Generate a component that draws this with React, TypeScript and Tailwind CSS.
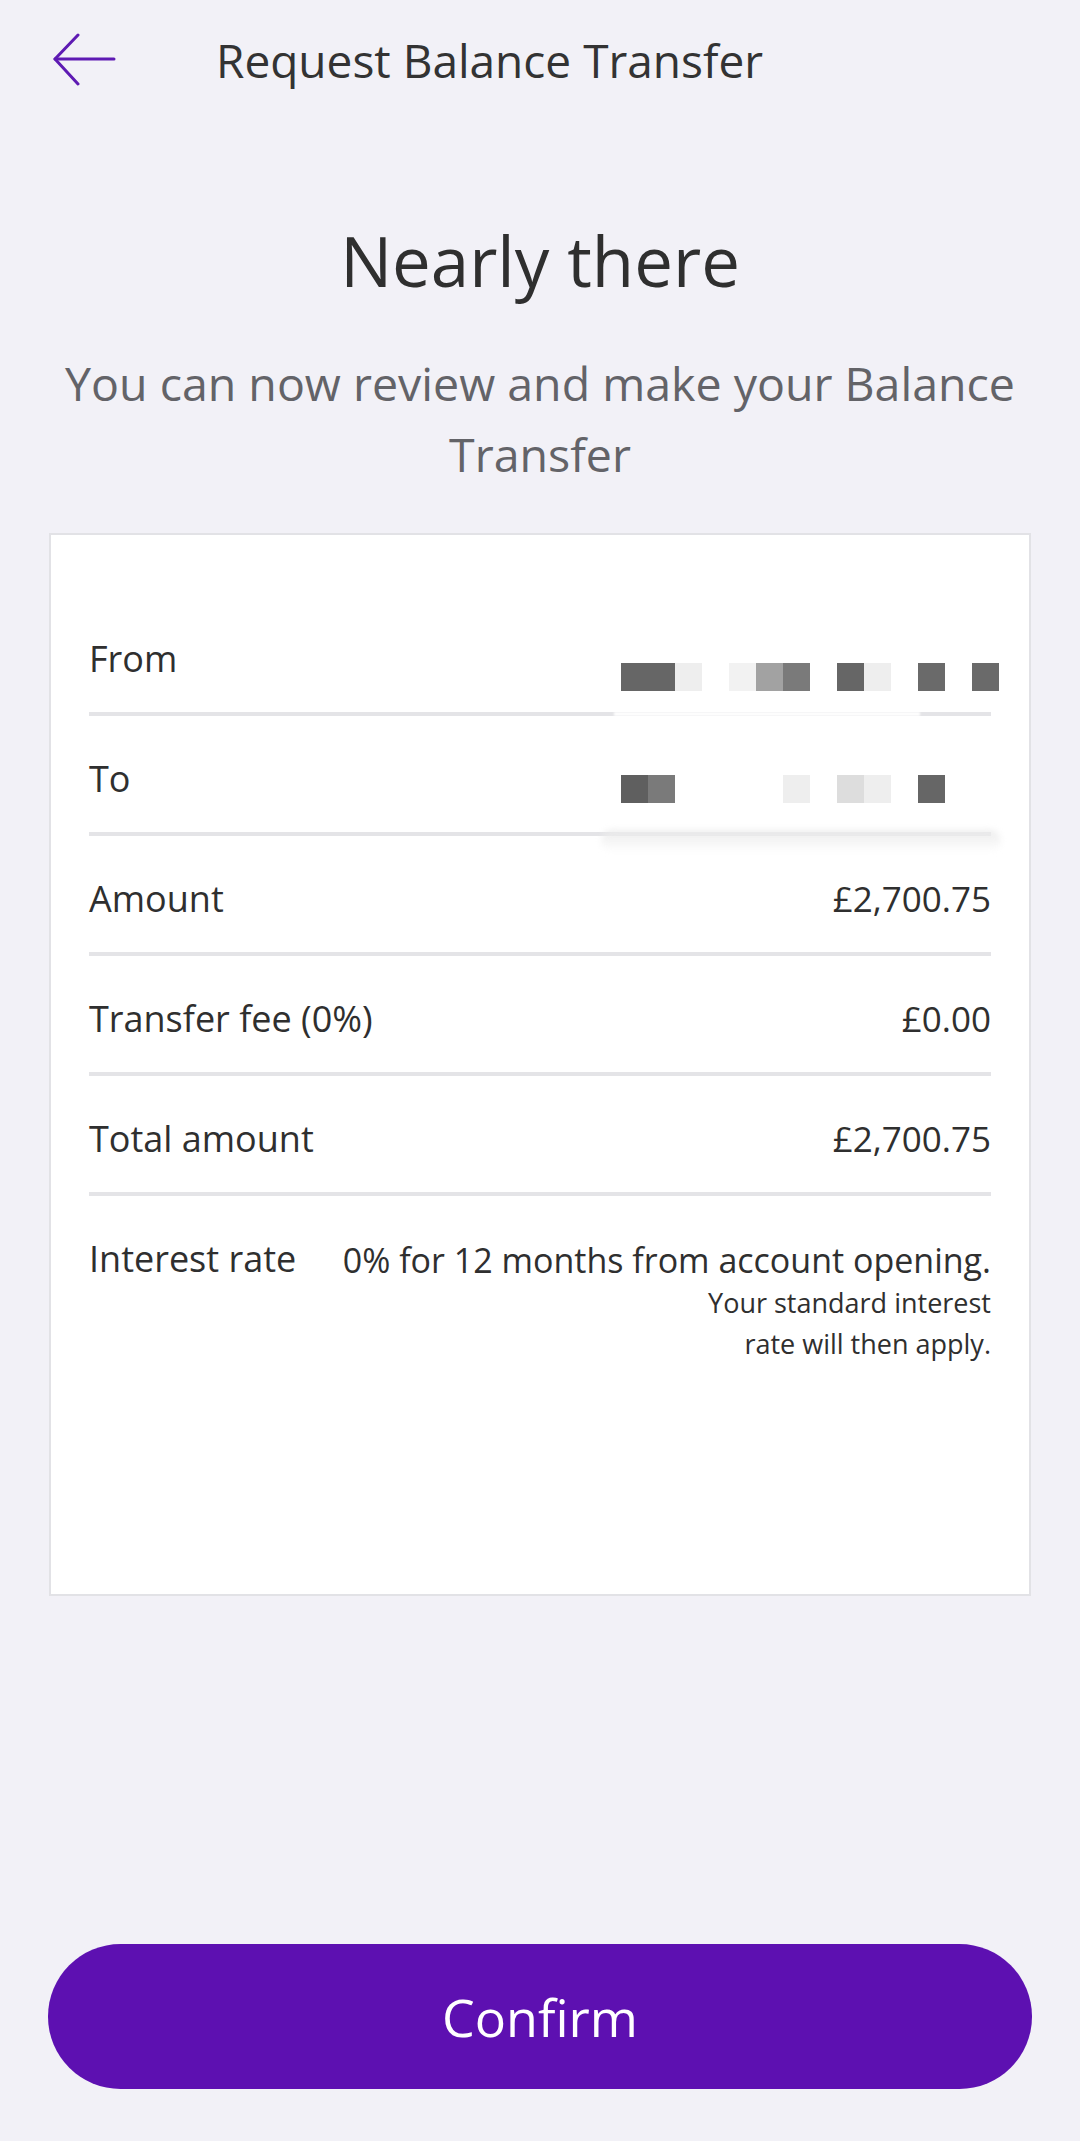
import React from "react";

const fromCells = [
  "bg-[#666666]",
  "bg-[#666666]",
  "bg-[#eeeeee]",
  "bg-white",
  "bg-[#f2f2f2]",
  "bg-[#a2a2a2]",
  "bg-[#7a7a7a]",
  "bg-white",
  "bg-[#666666]",
  "bg-[#eeeeee]",
  "bg-white",
  "bg-[#6a6a6a]",
  "bg-white",
  "bg-[#6a6a6a]",
];

const toCells = [
  "bg-[#5f5f5f]",
  "bg-[#7a7a7a]",
  "bg-white",
  "bg-white",
  "bg-white",
  "bg-white",
  "bg-[#eeeeee]",
  "bg-white",
  "bg-[#dddddd]",
  "bg-[#eeeeee]",
  "bg-white",
  "bg-[#666666]",
  "bg-white",
  "bg-white",
];

function Mosaic({ cells }: { cells: string[] }) {
  return (
    <div className="flex">
      {cells.map((c, i) => (
        <div key={i} className={"w-[27px] h-[28px] " + c} />
      ))}
    </div>
  );
}

function Row({ label, value }: { label: string; value: string }) {
  return (
    <div className="flex items-start justify-between pt-[42px] pb-[32px] border-b-4 border-[#e4e4e7] leading-[42px] text-[#2f2f2f]">
      <span className="text-[36px]">{label}</span>
      <span className="text-[35px]">{value}</span>
    </div>
  );
}

export default function App() {
  return (
    <div className="w-[1080px] min-h-[2141px] bg-[#f2f1f7] font-['Open_Sans',sans-serif] text-[#2f2f2f]">
      <header className="h-[120px] flex items-center">
        <button type="button" aria-label="Back" className="ml-[52px] w-[64px] h-[54px] flex items-center">
          <svg width="64" height="54" viewBox="0 0 64 54" fill="none" stroke="#5e1ab3" strokeWidth={3} strokeLinecap="round" strokeLinejoin="round">
            <path d="M3 26h59" />
            <path d="M26 2L3 26l23 25" />
          </svg>
        </button>
        <h1 className="ml-[100px] text-[46px] leading-[56px] text-[#333333]">Request Balance Transfer</h1>
      </header>

      <h2 className="mt-[100px] text-center text-[69px] leading-[80px] text-[#2f2f2f]">Nearly there</h2>
      <p className="mt-[48px] px-[30px] text-center text-[46.5px] leading-[71px] text-[#636368]">
        You can now review and make your Balance Transfer
      </p>

      <div className="mt-[43px] mx-[49px] h-[1063px] bg-white border-2 border-[#e2e2e6] px-[38px] pt-[57px]">
        <div className="relative flex items-start justify-between pt-[46px] pb-[32px] border-b-4 border-[#e4e4e7] leading-[42px]">
          <span className="text-[36px]">From</span>
          <div className="h-[42px] -mr-[8px]">
            <div className="mt-[25px]">
              <Mosaic cells={fromCells} />
            </div>
          </div>
          <div className="absolute left-[525px] -bottom-[4px] w-[306px] h-[4px] bg-white blur-[1px]" />
        </div>
        <div className="relative flex items-start justify-between pt-[42px] pb-[32px] border-b-4 border-[#e4e4e7] leading-[42px]">
          <span className="text-[36px]">To</span>
          <div className="h-[42px] -mr-[8px]">
            <div className="mt-[17px]">
              <Mosaic cells={toCells} />
            </div>
          </div>
          <div className="absolute left-[512px] -bottom-[20px] w-[400px] h-[22px] rounded-full bg-gradient-to-b from-[#ececec] to-white/0 blur-[3px]" />
        </div>
        <Row label="Amount" value="£2,700.75" />
        <Row label="Transfer fee (0%)" value="£0.00" />
        <Row label="Total amount" value="£2,700.75" />
        <div className="flex items-start justify-between pt-[42px]">
          <span className="text-[36px] leading-[42px]">Interest rate</span>
          <div className="text-right">
            <div className="text-[34px] leading-[44px]">0% for 12 months from account opening.</div>
            <div className="text-[27px] leading-[41px]">Your standard interest</div>
            <div className="text-[27px] leading-[41px]">rate will then apply.</div>
          </div>
        </div>
      </div>

      <div className="mt-[348px] mx-[48px]">
        <button
          type="button"
          className="w-full h-[145px] rounded-full bg-[#5d10b1] text-white text-[52px] leading-[60px]"
        >
          Confirm
        </button>
      </div>
    </div>
  );
}
